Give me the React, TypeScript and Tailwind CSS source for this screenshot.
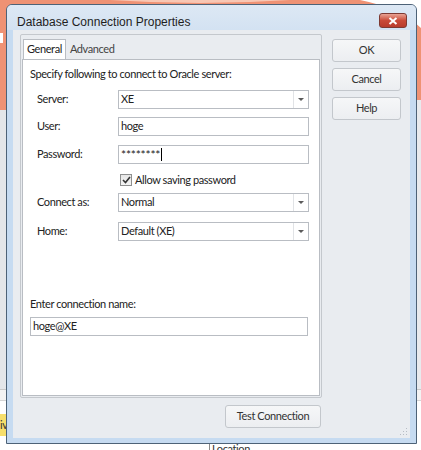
import React from 'react';

const body = { fontFamily: 'Lato, "Liberation Sans", Arial, sans-serif' };
const titleFont = { fontFamily: '"Liberation Sans", Arial, sans-serif' };

function Arrow() {
  return (
    <span className="w-0 h-0 border-l-[3px] border-r-[3px] border-t-[3px] border-l-transparent border-r-transparent border-t-[#5b5b5b]" />
  );
}

function Combo({ value, className = '' }: { value: string; className?: string }) {
  return (
    <div className={`flex h-[19px] w-[191px] border border-[#b9bdc3] bg-white ${className}`}>
      <span className="flex-1 pl-[2px] leading-[16px]">{value}</span>
      <span className="flex w-[15px] items-center justify-center border-l border-[#e1e3e6]">
        <Arrow />
      </span>
    </div>
  );
}

function TextBox({ children, className = '' }: { children: React.ReactNode; className?: string }) {
  return (
    <div className={`flex h-[19px] items-center border border-[#b9bdc3] bg-white pl-[2px] ${className}`}>
      {children}
    </div>
  );
}

function Row({ label, children, className = '' }: { label: string; children: React.ReactNode; className?: string }) {
  return (
    <div className={`flex items-center ${className}`}>
      <span className="w-[88px] pl-[7px]">{label}</span>
      {children}
    </div>
  );
}

function Btn({ children, className = '' }: { children: React.ReactNode; className?: string }) {
  return (
    <div className={`flex h-[23px] items-center justify-center rounded-[3px] border border-[#c3c7cc] bg-gradient-to-b from-[#f6f7f8] to-[#eceef1] text-[#333] ${className}`}>
      {children}
    </div>
  );
}

export default function App() {
  return (
    <div className="relative h-[450px] w-[421px] overflow-hidden bg-white text-[11px] tracking-[-0.4px] text-[#222]" style={body}>
      {/* desktop behind the dialog */}
      <svg className="absolute left-0 top-0" width="421" height="450">
        <rect x="0" y="0" width="421" height="120" fill="#ef9274" />
        <path d="M110 0 Q200 6 290 0 Z" fill="#f8c7b4" />
        <path d="M360 0 L421 0 L421 28 Q400 8 360 0 Z" fill="#ffffff" />
        <rect x="0" y="33" width="3" height="10" fill="#ffffff" />
        <rect x="0" y="110" width="6" height="282" fill="#e4e6e9" />
        <rect x="416" y="100" width="5" height="290" fill="#e8eaed" />
        <rect x="0" y="389" width="421" height="1" fill="#c9c9c9" />
        <rect x="0" y="390" width="421" height="10" fill="#f3f3f3" />
        <rect x="0" y="400" width="421" height="1" fill="#d5d5d5" />
        <rect x="0" y="414" width="6" height="22" fill="#f7df6c" />
        <rect x="209" y="443" width="1" height="7" fill="#8a8a8a" />
      </svg>
      <span className="absolute left-0 top-[417px] text-[11px] text-[#333]">iv</span>
      <span className="absolute left-[212px] top-[443px] text-[11px] leading-[12px] text-[#333]">Location</span>

      {/* dialog window */}
      <div className="absolute left-[6px] top-[4px] flex h-[440px] w-[411px] flex-col rounded-t-[6px] border border-[#4d6277] bg-[#c6dbf1]">
        <div className="flex h-[25px] items-start justify-between rounded-t-[5px] bg-gradient-to-b from-[#dde8f4] to-[#d3e2f2]">
          <span className="pl-[10px] pt-[10px] text-[12px] leading-[14px] tracking-normal text-[#1e1e1e]" style={titleFont}>
            Database Connection Properties
          </span>
          <span className="mr-[9px] mt-[8px] flex h-[15px] w-[28px] items-center justify-center rounded-[3px] border border-[#7d3a33] bg-gradient-to-b from-[#e8a294] via-[#c94a38] to-[#b83c2c]">
            <svg width="10" height="8" viewBox="0 0 10 8">
              <path d="M1.5 1 L8.5 7 M8.5 1 L1.5 7" stroke="#ffffff" strokeWidth="2" />
            </svg>
          </span>
        </div>

        <div className="relative mb-[5px] ml-[6px] mr-[6px] flex flex-1 flex-col bg-[#e9ecf0]">
          <div className="flex">
            {/* tab control */}
            <div className="ml-[7px] mt-[4px] flex h-[364px] w-[302px] flex-col rounded-[2px] border border-[#c4c8cd] px-[1px] pb-[1px] pt-[4px]">
              <div className="flex h-[20px] items-end pl-[1px]">
                <span className="flex h-[20px] items-center border border-b-0 border-[#b9bdc3] bg-white px-[3px] text-[#222]">General</span>
                <span className="flex h-[19px] items-center px-[4px] text-[#444]">Advanced</span>
              </div>
              <div className="flex flex-1 flex-col border border-[#b9bdc3] bg-white pl-[7px]">
                <span className="mt-[7px] leading-[14px]">Specify following to connect to Oracle server:</span>
                <Row label="Server:" className="mt-[9px]">
                  <Combo value="XE" />
                </Row>
                <Row label="User:" className="mt-[8px]">
                  <TextBox className="w-[191px]">hoge</TextBox>
                </Row>
                <Row label="Password:" className="mt-[9px]">
                  <TextBox className="w-[191px]">
                    <span className="text-[12px] leading-[12px] tracking-[-0.2px]">********</span>
                    <span className="ml-[1px] h-[13px] w-[1px] bg-black" />
                  </TextBox>
                </Row>
                <div className="ml-[90px] mt-[9px] flex h-[14px] items-center">
                  <span className="flex h-[12px] w-[12px] items-center justify-center border border-[#8e8f8f] bg-gradient-to-b from-[#e6e6e6] to-[#f4f4f4]">
                    <svg width="9" height="8" viewBox="0 0 9 8">
                      <path d="M1 4 L3.5 6.5 L8 1" stroke="#333" strokeWidth="1.6" fill="none" />
                    </svg>
                  </span>
                  <span className="ml-[3px]">Allow saving password</span>
                </div>
                <Row label="Connect as:" className="mt-[6px]">
                  <Combo value="Normal" />
                </Row>
                <Row label="Home:" className="mt-[10px]">
                  <Combo value="Default (XE)" />
                </Row>
                <span className="mt-[56px] leading-[14px]">Enter connection name:</span>
                <TextBox className="mt-[6px] w-[278px]">hoge@XE</TextBox>
              </div>
            </div>

            {/* side buttons */}
            <div className="ml-[10px] mt-[9px] flex w-[69px] flex-col gap-[6px]">
              <Btn>OK</Btn>
              <Btn>Cancel</Btn>
              <Btn>Help</Btn>
            </div>
          </div>

          <div className="ml-[212px] mt-[7px] w-[96px]">
            <Btn>Test Connection</Btn>
          </div>

          <svg className="absolute bottom-[2px] right-[2px]" width="8" height="8" viewBox="0 0 8 8">
            <rect x="6" y="0" width="1" height="1" fill="#b6bcc4" />
            <rect x="3" y="3" width="1" height="1" fill="#b6bcc4" />
            <rect x="6" y="3" width="1" height="1" fill="#b6bcc4" />
            <rect x="0" y="6" width="1" height="1" fill="#b6bcc4" />
            <rect x="3" y="6" width="1" height="1" fill="#b6bcc4" />
            <rect x="6" y="6" width="1" height="1" fill="#b6bcc4" />
          </svg>
        </div>
      </div>
    </div>
  );
}
